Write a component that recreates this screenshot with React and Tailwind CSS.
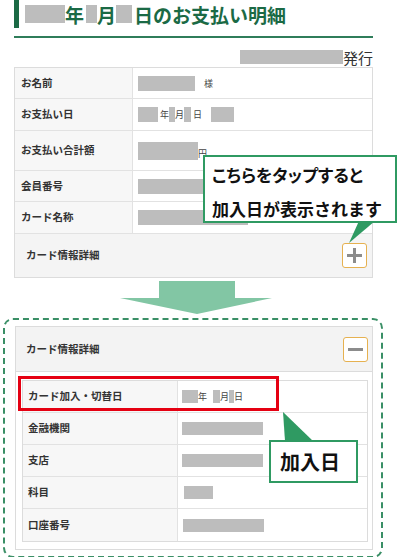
const gray = 'bg-[#bdbdbd]';

function Row({ label, className, children }) {
  return (
    <div className={`flex border-b border-[#e2e2e2] ${className}`}>
      <div className="flex w-[118px] shrink-0 items-center border-r border-[#e2e2e2] bg-[#f7f7f7] pl-[6px] text-[10.5px] font-bold text-[#333]">
        {label}
      </div>
      <div className="flex flex-1 items-center pl-[5px] text-[9px] text-[#444]">{children}</div>
    </div>
  );
}

function InnerRow({ label, children, last }) {
  return (
    <div className={`flex h-[32px] ${last ? '' : 'border-b border-[#e2e2e2]'}`}>
      <div className="flex w-[155px] shrink-0 items-center border-r border-[#e2e2e2] bg-[#f7f7f7] pl-[5px] text-[10.5px] font-bold text-[#333]">
        {label}
      </div>
      <div className="flex flex-1 items-center bg-white pl-[4px] text-[9px] text-[#444]">{children}</div>
    </div>
  );
}

function ToggleButton({ open }) {
  return (
    <div className="flex h-[25px] w-[25px] items-center justify-center rounded-[3px] border-[1.5px] border-[#e6b150] bg-white">
      <svg width="17" height="17" viewBox="0 0 17 17">
        <line x1="1" y1="8.5" x2="16" y2="8.5" stroke="#8c8c8c" strokeWidth="3" />
        {!open && <line x1="8.5" y1="1" x2="8.5" y2="16" stroke="#8c8c8c" strokeWidth="3" />}
      </svg>
    </div>
  );
}

export default function App() {
  return (
    <div className="relative h-[557px] w-[400px] overflow-hidden bg-white font-['Noto_Sans_CJK_JP','Noto_Sans',sans-serif] leading-none">
      {/* title */}
      <div className="ml-[14px] w-[359px] border-b-2 border-[#2f7d5a] pb-[8px]">
        <div className="flex h-[28px] items-center border-l-[5px] border-[#1b6a45] pl-[6px] text-[19px] font-bold text-[#1b6a45]">
          <span className={`h-[18px] w-[40px] ${gray}`} />
          <span>年</span>
          <span className={`ml-[2px] h-[18px] w-[11px] ${gray}`} />
          <span>月</span>
          <span className={`h-[18px] w-[16px] ${gray}`} />
          <span className="ml-[2px]">日のお支払い明細</span>
        </div>
      </div>

      <div className="ml-[14px] mt-[11px] flex h-[16px] w-[359px] items-center justify-end text-[15px] text-[#333]">
        <span className={`h-[14px] w-[103px] ${gray}`} />
        <span>発行</span>
      </div>

      {/* main table */}
      <div className="ml-[14px] mt-[2px] w-[359px] border border-b-0 border-[#dcdcdc]">
        <Row label="お名前" className="h-[31px]">
          <span className={`h-[15px] w-[57px] ${gray}`} />
          <span className="ml-[9px]">様</span>
        </Row>
        <Row label="お支払い日" className="h-[32px]">
          <span className={`h-[15px] w-[20px] ${gray}`} />
          <span className="ml-[2px]">年</span>
          <span className={`h-[15px] w-[6px] ${gray}`} />
          <span>月</span>
          <span className={`h-[15px] w-[7px] ${gray}`} />
          <span className="ml-[2px]">日</span>
          <span className={`ml-[9px] h-[15px] w-[23px] ${gray}`} />
        </Row>
        <Row label="お支払い合計額" className="h-[40px]">
          <span className={`h-[18px] w-[60px] ${gray}`} />
          <span className="mt-[6px]">円</span>
        </Row>
        <Row label="会員番号" className="h-[31px]">
          <span className={`h-[15px] w-[110px] ${gray}`} />
        </Row>
        <Row label="カード名称" className="h-[32px]">
          <span className={`h-[15px] w-[110px] ${gray}`} />
        </Row>
        <div className="flex h-[44px] items-center justify-between border-b border-[#dcdcdc] bg-[#f4f4f4] pl-[11px] pr-[5px] text-[10.5px] font-bold text-[#333]">
          <span>カード情報詳細</span>
          <ToggleButton open={false} />
        </div>
      </div>

      {/* arrow */}
      <div className="h-[40px] pl-[120px] pt-[3px]">
        <svg width="152" height="33" viewBox="0 0 152 33">
          <polygon points="39,0 115,0 115,17 152,17 77,33 0,17 39,17" fill="#82c6a4" />
        </svg>
      </div>

      {/* expanded panel */}
      <div className="ml-[3px] w-[380px] rounded-[10px] border-2 border-dashed border-[#3a8f66] pb-[6px] pl-[10px] pr-[8px] pt-[6px]">
        <div className="border border-[#dcdcdc]">
          <div className="flex h-[45px] items-center justify-between border-b border-[#dcdcdc] bg-[#f3f3f3] pl-[10px] pr-[4px] text-[10.5px] font-bold text-[#333]">
            <span>カード情報詳細</span>
            <ToggleButton open />
          </div>
          <div className="pb-[7px] pl-[6px] pr-[4px] pt-[8px]">
            <div className="border border-[#dcdcdc]">
              <InnerRow label="カード加入・切替日">
                <span className={`h-[13px] w-[16px] ${gray}`} />
                <span>年</span>
                <span className={`ml-[6px] h-[13px] w-[7px] ${gray}`} />
                <span>月</span>
                <span className={`h-[13px] w-[5px] ${gray}`} />
                <span>日</span>
              </InnerRow>
              <InnerRow label="金融機関">
                <span className={`h-[13px] w-[81px] ${gray}`} />
              </InnerRow>
              <InnerRow label="支店">
                <span className={`h-[13px] w-[81px] ${gray}`} />
              </InnerRow>
              <InnerRow label="科目">
                <span className={`ml-[2px] h-[13px] w-[29px] ${gray}`} />
              </InnerRow>
              <InnerRow label="口座番号" last>
                <span className={`ml-[1px] h-[13px] w-[81px] ${gray}`} />
              </InnerRow>
            </div>
          </div>
        </div>
      </div>

      {/* callout 1 */}
      <div className="absolute left-[203px] top-[155px] h-[68px] w-[194px] border-2 border-[#2f9a62] bg-white pl-[7px] pt-[1px] text-[17px] font-bold leading-[34px] text-[#111]">
        <div className="[font-feature-settings:'palt']">こちらをタップすると</div>
        <div>加入日が表示されます</div>
      </div>
      <svg className="absolute left-[345px] top-[221px]" width="34" height="24" viewBox="0 0 34 24">
        <polygon points="14,0 30,0 4,22" fill="#2f9a62" />
      </svg>

      {/* highlight */}
      <div className="absolute left-[18px] top-[376px] h-[35px] w-[261px] border-[3px] border-[#e50012]" />

      {/* callout 2 */}
      <svg className="absolute left-[280px] top-[410px]" width="36" height="32" viewBox="0 0 36 32">
        <polygon points="3,2 33,31 5,31" fill="#2f9a62" />
      </svg>
      <div className="absolute left-[269px] top-[440px] flex h-[43px] w-[89px] items-center border-2 border-[#2f9a62] bg-white pl-[9px] text-[20px] font-bold text-[#111]">
        加入日
      </div>
    </div>
  );
}
